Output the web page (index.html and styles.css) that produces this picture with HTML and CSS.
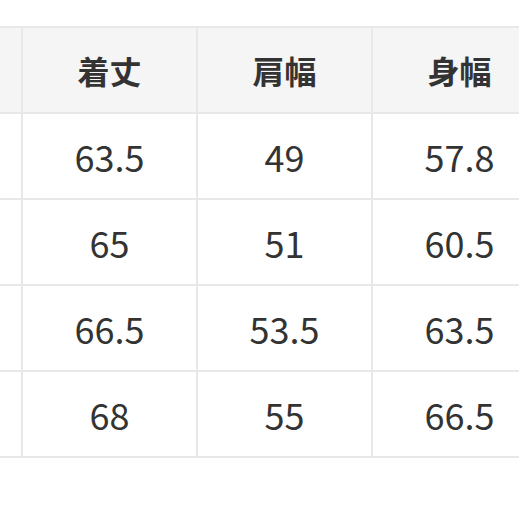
FILE: index.html
```html
<!DOCTYPE html>
<html lang="ja">
<head>
<meta charset="utf-8">
<link rel="stylesheet" href="styles.css">
</head>
<body>
<div class="wrap">
  <div class="table">
    <div class="cell head edge"></div>
    <div class="cell head">着丈</div>
    <div class="cell head">肩幅</div>
    <div class="cell head">身幅</div>

    <div class="cell edge"></div>
    <div class="cell">63.5</div>
    <div class="cell">49</div>
    <div class="cell">57.8</div>

    <div class="cell edge"></div>
    <div class="cell">65</div>
    <div class="cell">51</div>
    <div class="cell">60.5</div>

    <div class="cell edge"></div>
    <div class="cell">66.5</div>
    <div class="cell">53.5</div>
    <div class="cell">63.5</div>

    <div class="cell edge"></div>
    <div class="cell">68</div>
    <div class="cell">55</div>
    <div class="cell">66.5</div>
  </div>
</div>
</body>
</html>
```
FILE: styles.css
```css
html, body {
  margin: 0;
  padding: 0;
  background: #ffffff;
  overflow: hidden;
}
.wrap {
  width: 519px;
  height: 519px;
  overflow: hidden;
  padding-top: 26px;
  box-sizing: border-box;
}
.table {
  display: grid;
  grid-template-columns: 23px 175px 175px 175px;
  grid-auto-rows: 86px;
  width: 548px;
  border-top: 2px solid #e8e8e8;
  font-family: "Noto Sans CJK JP", "Noto Sans", sans-serif;
  color: #333333;
}
.cell {
  box-sizing: border-box;
  border-right: 2px solid #e8e8e8;
  border-bottom: 2px solid #e8e8e8;
  display: flex;
  align-items: center;
  justify-content: center;
  font-size: 36px;
  line-height: 1;
  background: #ffffff;
}
.head {
  background: #f5f5f5;
  font-weight: 700;
  font-size: 32px;
}
```
